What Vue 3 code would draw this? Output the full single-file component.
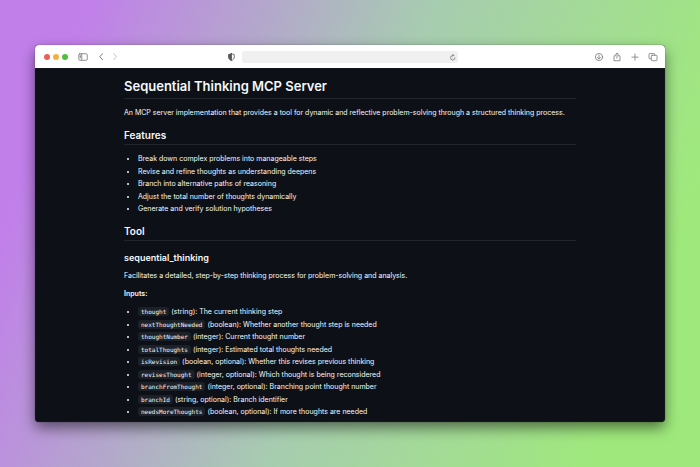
<script setup>
const features = [
  'Break down complex problems into manageable steps',
  'Revise and refine thoughts as understanding deepens',
  'Branch into alternative paths of reasoning',
  'Adjust the total number of thoughts dynamically',
  'Generate and verify solution hypotheses',
]

const inputs = [
  { name: 'thought', text: '(string): The current thinking step' },
  { name: 'nextThoughtNeeded', text: '(boolean): Whether another thought step is needed' },
  { name: 'thoughtNumber', text: '(integer): Current thought number' },
  { name: 'totalThoughts', text: '(integer): Estimated total thoughts needed' },
  { name: 'isRevision', text: '(boolean, optional): Whether this revises previous thinking' },
  { name: 'revisesThought', text: '(integer, optional): Which thought is being reconsidered' },
  { name: 'branchFromThought', text: '(integer, optional): Branching point thought number' },
  { name: 'branchId', text: '(string, optional): Branch identifier' },
  { name: 'needsMoreThoughts', text: '(boolean, optional): If more thoughts are needed' },
]
</script>

<template>
  <div class="desktop">
    <div class="window">
      <header class="toolbar">
        <div class="side">
          <div class="lights">
            <button class="light red" aria-label="Close"></button>
            <button class="light amber" aria-label="Minimize"></button>
            <button class="light green" aria-label="Zoom"></button>
          </div>
          <button class="tool" aria-label="Sidebar">
            <svg viewBox="0 0 20 20"><rect x="1.500" y="3.500" width="17" height="13" rx="2" /><path d="M7.500 3.500v13M4 6.500h1.500M4 9h1.500M4 11.500h1.500" /></svg>
          </button>
          <div class="history">
            <button class="tool dark" aria-label="Back">
              <svg viewBox="0 0 20 20"><path d="M13 3.500L7.500 9.500l5.500 6" /></svg>
            </button>
            <button class="tool faint" aria-label="Forward">
              <svg viewBox="0 0 20 20"><path d="M7.500 3.500l5.500 6-5.500 6" /></svg>
            </button>
          </div>
          <button class="tool dark privacy" aria-label="Privacy report">
            <svg viewBox="0 0 20 20"><path d="M11 3.500c1.800 1 3.600 1.300 5.500 1.500v5c0 3.500-2.300 5.500-5.500 7-3.200-1.500-5.500-3.500-5.500-7V5c1.900-.2 3.700-.5 5.500-1.500z" /><path class="solid" d="M11 3.500V17c-3.200-1.500-5.500-3.500-5.500-7V5c1.900-.2 3.700-.5 5.500-1.500z" /></svg>
          </button>
        </div>
        <div class="address">
          <input type="text" aria-label="Address" />
          <button class="tool reload" aria-label="Reload">
            <svg viewBox="0 0 20 20"><path d="M14 11.500a4.500 4.500 0 1 1-4.500-4.500h2M9.500 4.500l2 2.500-2 2" /></svg>
          </button>
        </div>
        <div class="side actions">
          <button class="tool" aria-label="Downloads">
            <svg viewBox="0 0 20 20"><circle cx="10" cy="10" r="7.200" /><path d="M10 6v7.500M7 10.800l3 3 3-3" /></svg>
          </button>
          <button class="tool" aria-label="Share">
            <svg viewBox="0 0 20 20"><path d="M7 7.500H4v10h12v-10h-3M10 12.500V2.500M7 5.200l3-3 3 3" /></svg>
          </button>
          <button class="tool" aria-label="New tab">
            <svg viewBox="0 0 20 20"><path d="M10 4v12.500M3.800 10.200h12.500" /></svg>
          </button>
          <button class="tool" aria-label="Tab overview">
            <svg viewBox="0 0 20 20"><rect x="6.500" y="6.500" width="11.500" height="11" rx="2" /><path d="M6.500 13.500H4a2 2 0 0 1-2-2V5a2 2 0 0 1 2-2h7.500a2 2 0 0 1 2 2v1.500" /></svg>
          </button>
        </div>
      </header>

      <main class="page">
        <article class="doc">
          <h1>Sequential Thinking MCP Server</h1>
          <p>An MCP server implementation that provides a tool for dynamic and reflective problem-solving through a structured thinking process.</p>
          <h2>Features</h2>
          <ul>
            <li v-for="item in features" :key="item">{{ item }}</li>
          </ul>
          <h2>Tool</h2>
          <h3>sequential_thinking</h3>
          <p>Facilitates a detailed, step-by-step thinking process for problem-solving and analysis.</p>
          <p><strong>Inputs:</strong></p>
          <ul>
            <li v-for="input in inputs" :key="input.name"><code>{{ input.name }}</code> {{ input.text }}</li>
          </ul>
        </article>
      </main>
    </div>
  </div>
</template>

<style>
body {
  margin: 0;
}
</style>

<style scoped>
.desktop {
  box-sizing: border-box;
  display: flex;
  height: 100vh;
  padding: 45px 5%;
  background: linear-gradient(110deg, #c17fea 10%, #a7ccb0 50%, #9fe97c 88%);
  font-family: Inter, "Liberation Sans", sans-serif;
}

.window {
  flex: 1;
  min-width: 0;
  display: flex;
  flex-direction: column;
  overflow: hidden;
  border-radius: 4px;
  background: #0d1117;
  box-shadow: 0 0 1px rgba(0, 0, 0, 0.7), 0 6px 14px rgba(0, 0, 0, 0.5);
}

.toolbar {
  display: grid;
  grid-template-columns: 1fr minmax(0, 216px) 1fr;
  column-gap: 6px;
  align-items: center;
  height: 23px;
  flex: none;
  padding: 0 7px;
  box-sizing: border-box;
  background: #fff;
}

.side,
.lights,
.history {
  display: flex;
  align-items: center;
}

.side {
  gap: 8px;
}

.lights {
  gap: 3px;
  padding: 0 2px;
}

.history {
  gap: 4px;
}

.actions {
  justify-content: flex-end;
}

.privacy {
  margin-left: auto;
}

button {
  flex: none;
  padding: 0;
  border: 0;
  background: none;
}

.light {
  width: 6px;
  height: 6px;
  border-radius: 50%;
}

.red {
  background: #ec5f57;
}

.amber {
  background: #f0b23c;
}

.green {
  background: #50bf40;
}

.tool {
  width: 10px;
  height: 10px;
  color: #777;
}

.dark {
  color: #555;
}

.faint {
  color: #b5b5b5;
}

svg {
  display: block;
  width: 100%;
  height: 100%;
  fill: none;
  stroke: currentColor;
  stroke-width: 1.6;
  stroke-linecap: round;
  stroke-linejoin: round;
}

.solid {
  fill: currentColor;
}

.address {
  display: flex;
  align-items: center;
  height: 12px;
  border-radius: 2px;
  background: #f0f0f0;
}

.address input {
  flex: 1;
  min-width: 0;
  height: 10px;
  padding: 0 4px;
  border: 0;
  outline: 0;
  background: transparent;
  font: 7px Inter, sans-serif;
}

.page {
  flex: 1;
  min-height: 0;
  overflow: hidden;
  padding: 9px 20px 0;
  color: #f4f8fc;
  box-shadow: inset 0 0 1px #50545c;
}

.doc {
  max-width: 452px;
  margin: 0 auto;
  font-size: 7px;
  line-height: 12px;
}

h1,
h2,
h3,
p,
ul {
  margin: 0;
}

h1,
h2,
h3,
strong {
  font-weight: 600;
}

h1,
h2 {
  border-bottom: 1px solid #21262d;
}

h1 {
  margin-bottom: 8px;
  padding-bottom: 3px;
  font-size: 13px;
  line-height: 18px;
}

h2 {
  margin: 9px 0 8px;
  padding-bottom: 2px;
  font-size: 10px;
  line-height: 14px;
}

h3 {
  margin: 11px 0 6px;
  font-size: 9px;
  line-height: 12px;
}

p {
  margin-bottom: 6px;
}

ul {
  padding-left: 14px;
}

li:nth-child(even) {
  padding-top: 1px;
}

code {
  padding: 1px 3px;
  border-radius: 3px;
  background: #1c2129;
  font: 6px "DejaVu Sans Mono", "Liberation Mono", monospace;
}
</style>
